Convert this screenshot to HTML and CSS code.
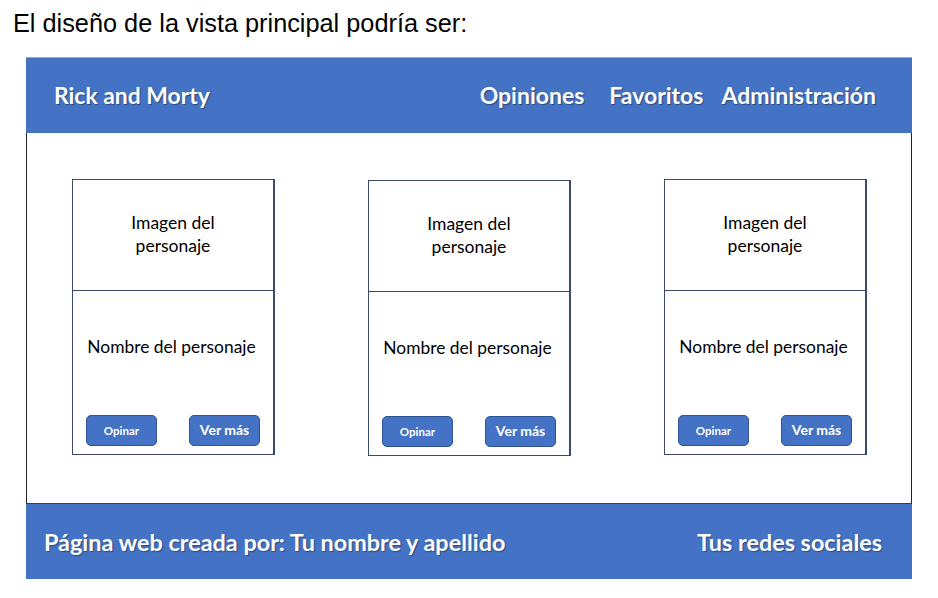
FILE: index.html
```html
<!DOCTYPE html>
<html lang="es">
<head>
<meta charset="utf-8">
<title>Vista principal</title>
<link rel="stylesheet" href="styles.css">
</head>
<body>
<p class="intro">El diseño de la vista principal podría ser:</p>
<div class="frame">
  <header class="topbar">
    <div class="brand">Rick and Morty</div>
    <nav class="nav">
      <span class="nav-item nav-op">Opiniones</span>
      <span class="nav-item nav-fav">Favoritos</span>
      <span class="nav-item">Administración</span>
    </nav>
  </header>
  <main class="content">
    <div class="card">
      <div class="card-img">Imagen del<br>personaje</div>
      <div class="card-body">
        <div class="card-name">Nombre del personaje</div>
        <div class="card-actions">
          <span class="btn btn-small">Opinar</span>
          <span class="btn">Ver más</span>
        </div>
      </div>
    </div>
    <div class="card card-mid">
      <div class="card-img">Imagen del<br>personaje</div>
      <div class="card-body">
        <div class="card-name">Nombre del personaje</div>
        <div class="card-actions">
          <span class="btn btn-small">Opinar</span>
          <span class="btn">Ver más</span>
        </div>
      </div>
    </div>
    <div class="card">
      <div class="card-img">Imagen del<br>personaje</div>
      <div class="card-body">
        <div class="card-name">Nombre del personaje</div>
        <div class="card-actions">
          <span class="btn btn-small">Opinar</span>
          <span class="btn">Ver más</span>
        </div>
      </div>
    </div>
  </main>
  <footer class="bottombar">
    <div>Página web creada por: Tu nombre y apellido</div>
    <div>Tus redes sociales</div>
  </footer>
</div>
</body>
</html>
```

FILE: styles.css
```css
html, body {
  margin: 0;
  padding: 0;
  background: #ffffff;
}
body {
  width: 938px;
  height: 598px;
  overflow: hidden;
}
.intro {
  margin: 0;
  padding: 8px 0 0 13px;
  height: 57px;
  box-sizing: border-box;
  font-family: "Liberation Sans", Arial, sans-serif;
  font-size: 25.3px;
  line-height: 30px;
  color: #000;
}
.frame {
  margin-left: 26px;
  width: 886px;
  font-family: Lato, "Open Sans", sans-serif;
}
.topbar {
  height: 76px;
  background: #4472c4;
  border-top: 1px solid #8fa8d8;
  box-sizing: border-box;
  display: flex;
  align-items: center;
  justify-content: space-between;
  padding: 0 36px 0 28px;
  color: #fff;
  font-weight: 700;
  font-size: 23px;
  text-shadow: 1px 1px 1px rgba(0,0,0,0.35);
}
.brand {
  font-size: 22.9px;
  padding-bottom: 2px;
}
.nav {
  display: flex;
  gap: 0;
  padding-bottom: 1px;
}
.nav-item {
  display: inline-block;
}
.nav-op { margin-right: 25px; }
.nav-fav { margin-right: 18px; }
.content {
  height: 371px;
  box-sizing: border-box;
  border-left: 1px solid #222;
  border-right: 1px solid #222;
  border-bottom: 1px solid #2f3d55;
  display: flex;
  align-items: flex-start;
  padding: 46px 0 0 45px;
  gap: 93px;
}
.card {
  width: 203px;
  height: 276px;
  box-sizing: border-box;
  border: 1px solid #3b4a68;
  border-right-width: 2px;
  display: flex;
  flex-direction: column;
  color: #000;
}
.card-mid {
  margin-top: 1px;
}
.card-img {
  height: 111px;
  box-sizing: border-box;
  border-bottom: 1px solid #3b4a68;
  display: flex;
  align-items: center;
  justify-content: center;
  text-align: center;
  font-size: 17.5px;
  line-height: 23px;
  padding-bottom: 2px;
}
.card-body {
  flex: 1;
  display: flex;
  flex-direction: column;
  padding: 0 13px 0 13px;
}
.card-name {
  margin-top: 45px;
  text-align: center;
  font-size: 17.4px;
  line-height: 22px;
  padding-right: 3px;
}
.card-actions {
  margin-top: 57px;
  display: flex;
  justify-content: space-between;
}
.btn {
  width: 71px;
  height: 31px;
  box-sizing: border-box;
  background: #4472c4;
  border: 1px solid #2f5597;
  border-radius: 5px;
  color: #fff;
  font-weight: 700;
  font-size: 14px;
  display: flex;
  align-items: center;
  justify-content: center;
  padding-bottom: 3px;
}
.btn-small {
  font-size: 11.5px;
  padding-bottom: 0;
}
.bottombar {
  height: 75px;
  background: #4472c4;
  display: flex;
  align-items: center;
  justify-content: space-between;
  padding: 0 30px 0 18px;
  color: #fff;
  font-size: 23.4px;
  font-weight: 700;
  text-shadow: 1px 1px 1px rgba(0,0,0,0.35);
}
```
